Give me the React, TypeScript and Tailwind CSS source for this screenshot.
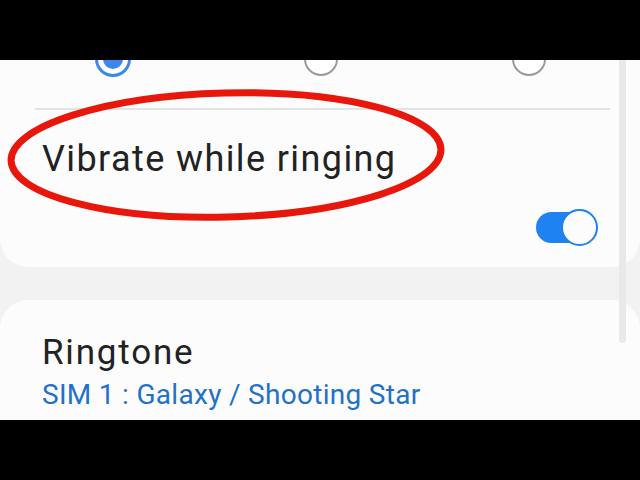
// App.tsx
const Radio = ({ checked }: { checked?: boolean }) => {
  if (checked) {
    return (
      <div className="w-[36px] h-[36px] rounded-full border-[3px] border-[#3b87f0] flex items-center justify-center bg-white shrink-0">
        <div className="w-[20px] h-[20px] rounded-full bg-[#3b87f0]" />
      </div>
    );
  }
  return <div className="w-[34px] h-[34px] rounded-full border-2 border-[#9a9a9a] bg-white shrink-0" />;
};

const Toggle = () => (
  <div className="relative w-[62px] h-[37px] flex items-center">
    <div className="w-[48px] h-[31px] rounded-full bg-[#1e83f0]" />
    <div className="absolute right-0 top-0 w-[37px] h-[37px] rounded-full bg-[#fcfcfc] border-2 border-[#1e83f0]" />
  </div>
);

const App = () => {
  return (
    <div className="w-[640px] h-[480px] bg-black flex flex-col" style={{ fontFamily: "Roboto, 'Noto Sans', sans-serif" }}>
      <div className="h-[60px] shrink-0" />
      <div className="relative h-[360px] bg-[#f2f2f2] overflow-hidden">
        {/* card 1 */}
        <div className="bg-[#fcfcfc] rounded-b-[28px] h-[207px] flex flex-col">
          <div className="-mt-[19px] h-[36px] flex items-center pl-[95px]">
            <Radio checked />
            <div className="ml-[173px]">
              <Radio />
            </div>
            <div className="ml-[174px]">
              <Radio />
            </div>
          </div>
          <div className="mt-[31px] ml-[35px] mr-[30px] h-[2px] bg-[#e3e3e3]" />
          <div className="pl-[42px] mt-[27px] text-[36px] leading-[44px] text-[#222222] tracking-[1.4px]">Vibrate while ringing</div>
          <div className="flex justify-end pr-[42px] mt-[28px]">
            <Toggle />
          </div>
        </div>

        {/* card 2 */}
        <div className="mt-[33px] bg-[#fcfcfc] rounded-t-[28px] h-[200px] pl-[42px] pt-[32px]">
          <div className="text-[35px] leading-[42px] text-[#222222] tracking-[1.8px]">Ringtone</div>
          <div className="text-[28px] leading-[36px] text-[#1f72c8] mt-[3px] tracking-[0.3px]">SIM 1 : Galaxy / Shooting Star</div>
        </div>

        {/* scrollbar */}
        <div className="absolute left-[619px] top-0 w-[7px] h-[283px] bg-[#e9e9e9] rounded-b-full" />

        {/* red annotation ellipse */}
        <svg className="absolute left-0 top-0" width="640" height="360" viewBox="0 0 640 360">
          <ellipse cx="226" cy="95" rx="215" ry="62" fill="none" stroke="#e8170b" strokeWidth="7" transform="rotate(-1.5 226 95)" />
        </svg>
      </div>
      <div className="h-[60px] shrink-0" />
    </div>
  );
};

export default App;
